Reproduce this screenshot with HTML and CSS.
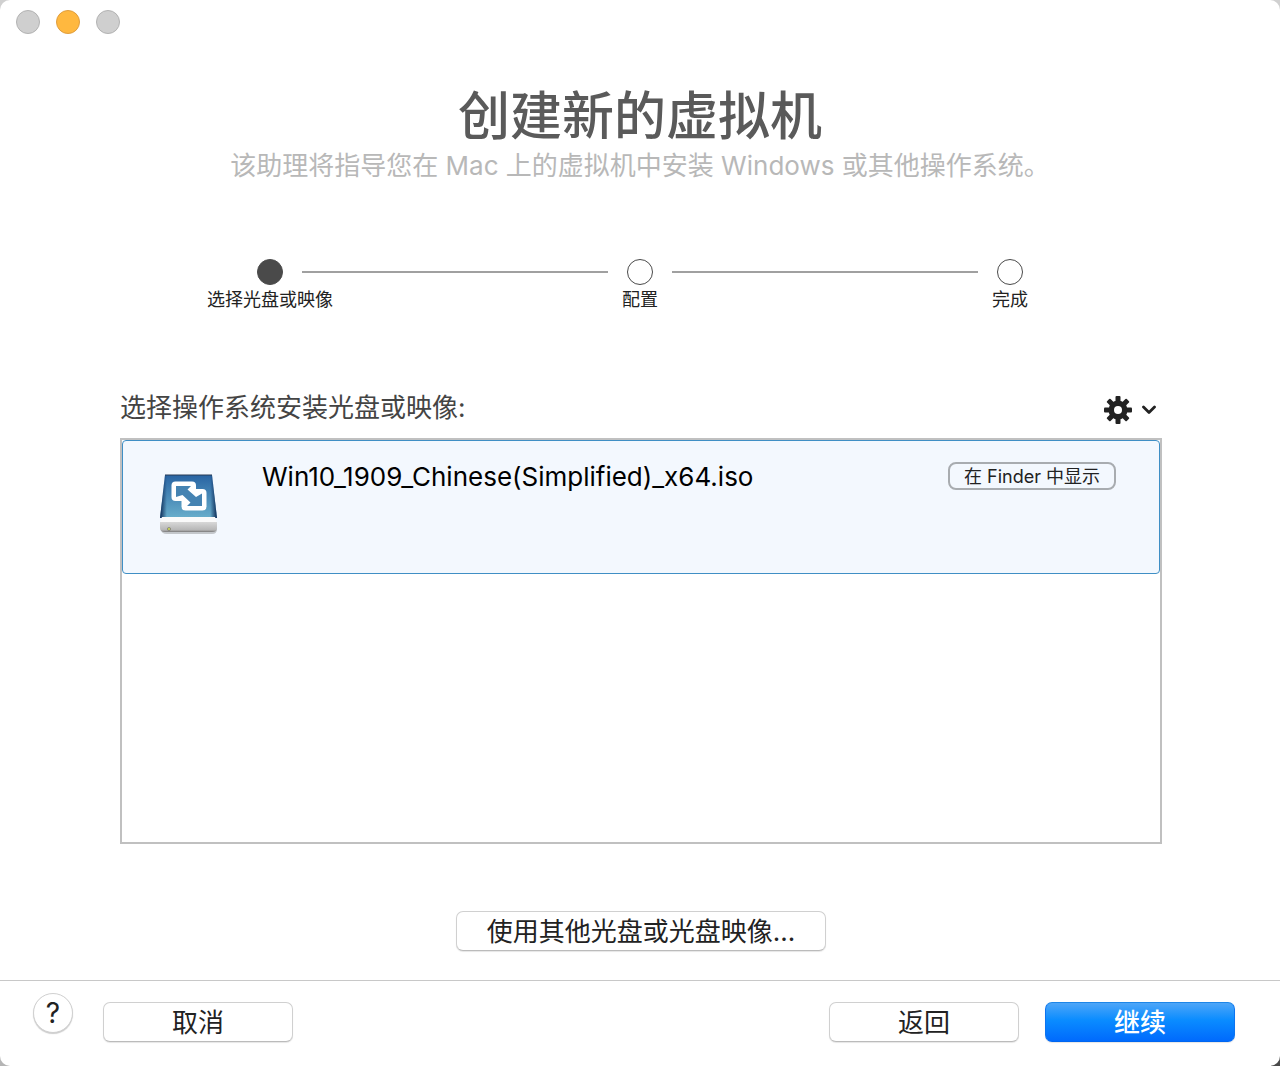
FILE: index.html
```html
<!DOCTYPE html>
<html lang="zh-CN">

<head>
	<meta charset="utf-8">
	<meta name="viewport" content="width=device-width, initial-scale=1">
	<title>创建新的虚拟机</title>
	<link rel="stylesheet" href="styles.css">
</head>

<body>
	<div class="window">
		<div class="titlebar">
			<button class="light" aria-label="关闭"></button>
			<button class="light minimize" aria-label="最小化"></button>
			<button class="light" aria-label="缩放"></button>
		</div>

		<header class="intro">
			<h1>创建新的虚拟机</h1>
			<p>该助理将指导您在 Mac 上的虚拟机中安装 Windows 或其他操作系统。</p>
		</header>

		<ol class="steps">
			<li class="step current"><span class="dot"></span><span class="step-name">选择光盘或映像</span></li>
			<li class="line" role="presentation"></li>
			<li class="step"><span class="dot"></span><span class="step-name">配置</span></li>
			<li class="line" role="presentation"></li>
			<li class="step"><span class="dot"></span><span class="step-name">完成</span></li>
		</ol>

		<main class="content">
			<div class="list-head">
				<h2>选择操作系统安装光盘或映像:</h2>
				<button class="gear" aria-label="选项">
					<svg width="28" height="28" viewBox="-14 -14 28 28">
						<g fill="#222">
							<rect x="-2.5" y="-14" width="5" height="28" rx="1" />
							<rect x="-2.5" y="-14" width="5" height="28" rx="1" transform="rotate(45)" />
							<rect x="-2.5" y="-14" width="5" height="28" rx="1" transform="rotate(90)" />
							<rect x="-2.5" y="-14" width="5" height="28" rx="1" transform="rotate(135)" />
							<circle r="9.5" />
						</g>
						<circle r="4" fill="#fff" />
					</svg>
					<svg width="14" height="10" viewBox="0 0 14 10">
						<path d="M1.5 2L7 7.5L12.5 2" fill="none" stroke="#222" stroke-width="2.8" stroke-linecap="round" stroke-linejoin="round" />
					</svg>
				</button>
			</div>

			<ul class="images">
				<li class="image selected">
					<svg class="disk" width="60" height="64" viewBox="0 0 60 64">
						<defs>
							<linearGradient id="blue" x1="0" y1="0" x2="0" y2="1">
								<stop offset="0" stop-color="#2864a3" />
								<stop offset="1" stop-color="#69aecb" />
							</linearGradient>
							<linearGradient id="edge" x1="0" y1="0" x2="1" y2="0">
								<stop offset="0" stop-color="#0b2854" />
								<stop offset="0.12" stop-color="#0b2854" stop-opacity="0" />
								<stop offset="0.88" stop-color="#0b2854" stop-opacity="0" />
								<stop offset="1" stop-color="#0b2854" />
							</linearGradient>
							<linearGradient id="metal" x1="0" y1="0" x2="0" y2="1">
								<stop offset="0" stop-color="#d8d8d8" />
								<stop offset="0.8" stop-color="#b6b6b6" />
								<stop offset="1" stop-color="#777" />
							</linearGradient>
						</defs>
						<path d="M1 50V57Q1 62 7 62H52Q57 62 57 57V50Z" fill="#333" opacity="0.25" />
						<path d="M5 3H52L57 46H0Z" fill="url(#blue)" />
						<path d="M5 3H52L57 46H0Z" fill="url(#edge)" />
						<path d="M5 3H52" stroke="#273b55" />
						<path d="M2 45H55L57 52H0Z" fill="#fafafa" />
						<path d="M0 50H57V56Q57 60 52 60H5Q0 60 0 56Z" fill="url(#metal)" />
						<!-- two overlapping frames joined by a double arrow -->
						<rect x="11.5" y="9.5" width="24.5" height="19.5" rx="4" fill="#fff" />
						<rect x="21.5" y="17" width="25" height="21.5" rx="4" fill="#fff" />
						<path d="M16 14H31L27.5 17.5L36 25L42 21.5V34H27L30.5 30.5L22.5 23L16 25Z" fill="#4583b2" />
						<path d="M31 13.5V18L33 20L36 18V13.5Z" fill="#fff" />
						<circle cx="9" cy="57" r="1.8" fill="#77775f" />
						<circle cx="9" cy="57" r="1" fill="#d8e65a" />
					</svg>
					<span class="image-name">Win10_1909_Chinese(Simplified)_x64.iso</span>
					<button class="reveal">在 Finder 中显示</button>
				</li>
			</ul>

			<button class="btn other">使用其他光盘或光盘映像...</button>
		</main>

		<footer class="footer">
			<button class="help" aria-label="帮助">?</button>
			<button class="btn">取消</button>
			<button class="btn back">返回</button>
			<button class="btn primary">继续</button>
		</footer>
	</div>
</body>

</html>
```

FILE: styles.css
```css
* {
	box-sizing: border-box;
}

body {
	margin: 0;
	background: linear-gradient(to right, #b5b5b5 50%, #4a4a4a 50%) bottom / 100% 50% no-repeat #d0d0d0;
	font-family: Inter, "Noto Sans CJK SC", sans-serif;
	color: #222;
}

button {
	font-family: inherit;
	color: inherit;
	padding: 0;
	cursor: pointer;
}

h1,
h2,
p,
ol,
ul {
	margin: 0;
	padding: 0;
	font-weight: normal;
	list-style: none;
}

.window {
	display: flex;
	flex-direction: column;
	min-height: 100vh;
	background: #fff;
	border-radius: 10px;
}

/* title bar */
.titlebar {
	display: flex;
	gap: 16px;
	padding: 10px 16px;
}

.light {
	width: 24px;
	height: 24px;
	border: 1px solid #b3b3b3;
	border-radius: 50%;
	background: #cfcfcf;
}

.minimize {
	border-color: #e09e3e;
	background: #ffb83f;
}

.intro {
	padding-top: 41px;
	text-align: center;
}

.intro h1 {
	font-size: 52px;
	line-height: 64px;
	font-weight: 500;
	color: #5a5a5a;
}

.intro p {
	font-size: 26px;
	line-height: 34px;
	color: #b8b8b8;
}

/* progress */
.steps {
	display: flex;
	align-items: flex-start;
	margin: 76px 238px 0;
}

.step {
	display: flex;
	flex-direction: column;
	align-items: center;
	width: 64px;
}

.dot {
	width: 26px;
	height: 26px;
	border: 1px solid #4a4a4a;
	border-radius: 50%;
}

.current .dot {
	background: #4a4a4a;
}

.step-name {
	font-size: 18px;
	line-height: 30px;
	white-space: nowrap;
}

.line {
	flex: 1;
	height: 2px;
	margin-top: 12px;
	background: #a0a0a0;
}

/* image list */
.content {
	flex: 1;
	display: flex;
	flex-direction: column;
	padding: 73px 118px 29px 120px;
}

.list-head {
	display: flex;
	align-items: center;
	justify-content: space-between;
	height: 40px;
}

.list-head h2 {
	font-size: 26px;
	line-height: 40px;
	color: #444;
}

.gear {
	display: flex;
	align-items: center;
	gap: 10px;
	margin: 4px 6px 0 0;
	border: 0;
	background: none;
}

.images {
	flex: 1;
	margin-top: 10px;
	border: 2px solid #c0c0c0;
}

.image {
	display: flex;
	align-items: flex-start;
	height: 134px;
	padding: 21px 43px 0 37px;
	border: 1px solid #3f8fc5;
	border-radius: 4px;
}

.selected {
	background: #f3f8fe;
}

.disk {
	margin-top: 10px;
}

.image-name {
	flex: 1;
	margin-left: 42px;
	font-size: 26px;
	line-height: 30px;
	color: #000;
}

.reveal {
	width: 168px;
	height: 28px;
	padding-top: 1px;
	border: 2px solid #a8acb0;
	border-radius: 8px;
	background: none;
	font-size: 18px;
	line-height: 24px;
}

.btn {
	width: 190px;
	height: 40px;
	padding-top: 2px;
	border: 1px solid #d0d0d0;
	border-bottom-color: #bbb;
	border-radius: 7px;
	background: #fff;
	box-shadow: 0 1px 1px rgba(0, 0, 0, 0.1);
	font-size: 26px;
	line-height: 36px;
}

.other {
	align-self: center;
	width: 370px;
	margin-top: 67px;
}

/* bottom bar */
.footer {
	display: flex;
	align-items: flex-start;
	padding: 21px 45px 24px 33px;
	border-top: 1px solid #c8c8c8;
}

.help {
	width: 40px;
	height: 40px;
	margin: -9px 30px 0 0;
	border: 1px solid #d0d0d0;
	border-radius: 50%;
	background: #fff;
	box-shadow: 0 1px 1px rgba(0, 0, 0, 0.2);
	font-size: 28px;
	line-height: 38px;
}

.back {
	margin: 0 26px 0 auto;
}

.primary {
	border-color: #1d86e8 #0c74f0 #0066f0;
	background: linear-gradient(to bottom, #4ea6f8, #0a8cff 45%, #006afd);
	font-weight: 500;
	color: #fff;
}
```
